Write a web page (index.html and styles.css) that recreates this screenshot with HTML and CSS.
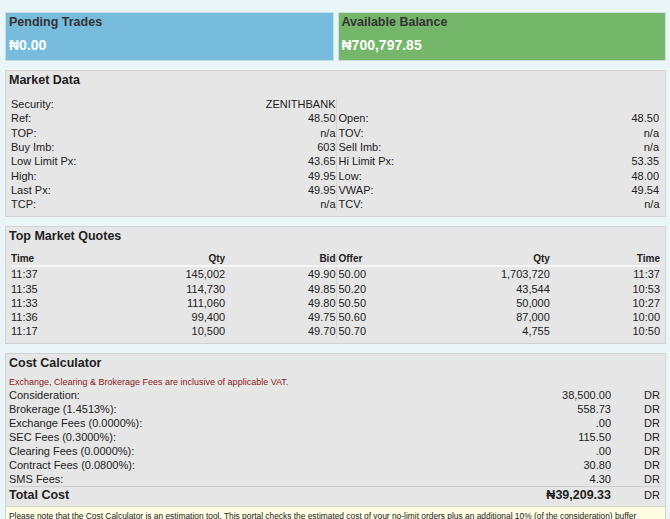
FILE: index.html
```html
<!DOCTYPE html>
<html lang="en">
<head>
    <meta charset="UTF-8">
    <title>Trade Ticket</title>
    <link rel="stylesheet" href="styles.css">
</head>
<body>
    <div class="summary">
        <div class="summary-box pending">
            <h2>Pending Trades</h2>
            <div class="amount">&#8358;0.00</div>
        </div>
        <div class="summary-box balance">
            <h2>Available Balance</h2>
            <div class="amount">&#8358;700,797.85</div>
        </div>
    </div>

    <div class="panel market">
        <h3>Market Data</h3>
        <div class="split">
            <table class="kv">
                <tr><td>Security:</td><td>ZENITHBANK</td></tr>
                <tr><td>Ref:</td><td>48.50</td></tr>
                <tr><td>TOP:</td><td>n/a</td></tr>
                <tr><td>Buy Imb:</td><td>603</td></tr>
                <tr><td>Low Limit Px:</td><td>43.65</td></tr>
                <tr><td>High:</td><td>49.95</td></tr>
                <tr><td>Last Px:</td><td>49.95</td></tr>
                <tr><td>TCP:</td><td>n/a</td></tr>
            </table>
            <table class="kv right-half">
                <tr><td>&nbsp;</td><td></td></tr>
                <tr><td>Open:</td><td>48.50</td></tr>
                <tr><td>TOV:</td><td>n/a</td></tr>
                <tr><td>Sell Imb:</td><td>n/a</td></tr>
                <tr><td>Hi Limit Px:</td><td>53.35</td></tr>
                <tr><td>Low:</td><td>48.00</td></tr>
                <tr><td>VWAP:</td><td>49.54</td></tr>
                <tr><td>TCV:</td><td>n/a</td></tr>
            </table>
        </div>
    </div>

    <div class="panel quotes">
        <h3>Top Market Quotes</h3>
        <div class="split">
            <table class="book">
                <thead><tr><th class="l">Time</th><th>Qty</th><th>Bid</th></tr></thead>
                <tbody>
                    <tr><td class="l">11:37</td><td>145,002</td><td>49.90</td></tr>
                    <tr><td class="l">11:35</td><td>114,730</td><td>49.85</td></tr>
                    <tr><td class="l">11:33</td><td>111,060</td><td>49.80</td></tr>
                    <tr><td class="l">11:36</td><td>99,400</td><td>49.75</td></tr>
                    <tr><td class="l">11:17</td><td>10,500</td><td>49.70</td></tr>
                </tbody>
            </table>
            <table class="book right-half">
                <thead><tr><th class="l">Offer</th><th>Qty</th><th>Time</th></tr></thead>
                <tbody>
                    <tr><td class="l">50.00</td><td>1,703,720</td><td>11:37</td></tr>
                    <tr><td class="l">50.20</td><td>43,544</td><td>10:53</td></tr>
                    <tr><td class="l">50.50</td><td>50,000</td><td>10:27</td></tr>
                    <tr><td class="l">50.60</td><td>87,000</td><td>10:00</td></tr>
                    <tr><td class="l">50.70</td><td>4,755</td><td>10:50</td></tr>
                </tbody>
            </table>
        </div>
    </div>

    <div class="panel cost">
        <h3>Cost Calculator</h3>
        <p class="vat-note">Exchange, Clearing &amp; Brokerage Fees are inclusive of applicable VAT.</p>
        <table class="fees">
            <tr><td>Consideration:</td><td>38,500.00</td><td>DR</td></tr>
            <tr><td>Brokerage (1.4513%):</td><td>558.73</td><td>DR</td></tr>
            <tr><td>Exchange Fees (0.0000%):</td><td>.00</td><td>DR</td></tr>
            <tr><td>SEC Fees (0.3000%):</td><td>115.50</td><td>DR</td></tr>
            <tr><td>Clearing Fees (0.0000%):</td><td>.00</td><td>DR</td></tr>
            <tr><td>Contract Fees (0.0800%):</td><td>30.80</td><td>DR</td></tr>
            <tr><td>SMS Fees:</td><td>4.30</td><td>DR</td></tr>
            <tr class="total"><td>Total Cost</td><td>&#8358;39,209.33</td><td>DR</td></tr>
        </table>
        <div class="disclaimer">
            Please note that the Cost Calculator is an estimation tool. This portal checks the estimated cost of your no-limit orders plus an additional 10% (of the consideration) buffer
        </div>
    </div>
</body>
</html>
```

FILE: styles.css
```css
body {
    font-family: "Liberation Sans", Arial, sans-serif;
    font-size: 11px;
    color: #222;
    margin: 0;
    padding: 12px 4px 0 5px;
    background-color: #eaf5f8;
    overflow: hidden;
}
.summary {
    display: grid;
    grid-template-columns: 1fr 1fr;
    gap: 4px;
}
.summary-box {
    height: 47px;
    padding: 0 3px;
    border: 1px solid #c9dde4;
}
.summary-box h2 {
    margin: 0;
    padding-top: 1px;
    font-size: 12.5px;
    line-height: 17px;
    color: #333;
}
.summary-box .amount {
    margin-top: 6px;
    font-size: 14px;
    font-weight: bold;
    color: #fff;
}
.pending {
    background-color: #77bcdd;
}
.balance {
    background-color: #74b66a;
}
.panel {
    background-color: #e6e6e6;
    border: 1px solid #d2d2d2;
    margin-top: 9px;
}
.panel h3 {
    margin: 0;
    padding: 1px 3px 0;
    font-size: 12.5px;
    line-height: 17px;
    color: #222;
}
.split {
    display: grid;
    grid-template-columns: 1fr 1fr;
    padding: 0 5px 0 5px;
}
table {
    border-collapse: collapse;
    width: 100%;
}
td, th {
    padding: 0;
    font-size: 11px;
    line-height: 14px;
    height: 14.3px;
    text-align: right;
    white-space: nowrap;
}
.kv td:first-child {
    text-align: left;
}
.market .split {
    margin-top: 8px;
    padding-bottom: 5px;
}
.right-half {
    border-left: 1px solid #d4d4d4;
}
.right-half td:first-child,
.right-half th:first-child {
    padding-left: 2px;
}
.quotes .split {
    margin-top: 8px;
    padding-bottom: 5px;
}
.book th {
    font-size: 10px;
    font-weight: bold;
    line-height: 12px;
    height: 12px;
    border-bottom: 2px solid #f7f7f7;
}
.book td {
    height: 14.2px;
}
.book .l {
    text-align: left;
}
.book th:nth-child(2), .book td:nth-child(2) {
    width: 32%;
}
.book th:nth-child(3), .book td:nth-child(3) {
    width: 34%;
}
.vat-note {
    margin: 4px 3px 0;
    font-size: 9px;
    line-height: 12px;
    color: #8b1a1a;
}
.fees {
    margin: 0 5px 0 3px;
    width: calc(100% - 8px);
}
.fees td {
    line-height: 14px;
    height: 14px;
}
.fees td:first-child {
    text-align: left;
}
.fees td:last-child {
    width: 49px;
}
.fees .total td {
    border-top: 1px solid #cfcfcf;
    font-size: 12.5px;
    font-weight: bold;
    line-height: 17px;
    height: 17px;
}
.fees .total td:last-child {
    font-weight: normal;
    font-size: 11px;
}
.disclaimer {
    margin-top: 2px;
    background-color: #fefde3;
    border-top: 1px solid #d8d8c0;
    padding: 3px 3px;
    font-size: 8.4px;
    line-height: 12px;
    white-space: nowrap;
    overflow: hidden;
}
```
